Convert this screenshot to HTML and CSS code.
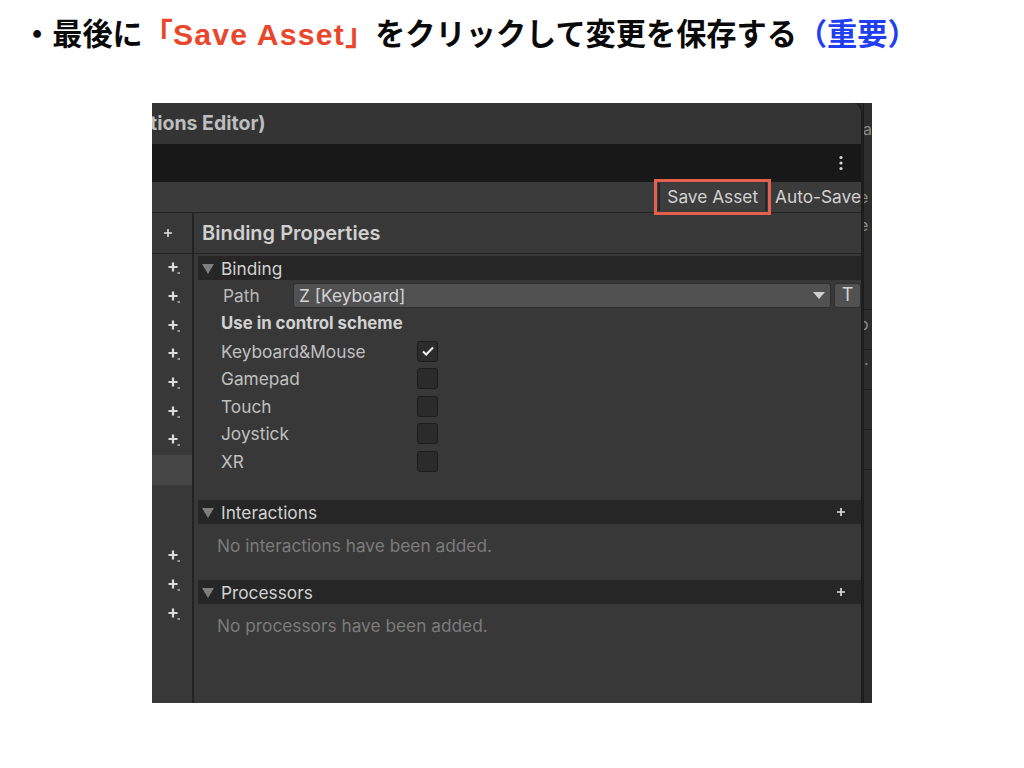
FILE: index.html
```html
<!DOCTYPE html>
<html lang="ja">
<head>
<meta charset="utf-8">
<title>Save Asset</title>
<link rel="stylesheet" href="styles.css">
</head>
<body>
<div class="page">
  <h1 class="headline">・最後に<span class="red">「<span class="latin">Save Asset</span>」</span>をクリックして変更を保存する<span class="blue">（重要）</span></h1>

  <div class="shot">
    <div class="editor">
      <div class="titlebar">tions Editor)</div>
      <div class="menubar">
        <svg class="kebab" width="6" height="16" viewBox="0 0 6 16"><circle cx="3" cy="2.5" r="1.6"/><circle cx="3" cy="8" r="1.6"/><circle cx="3" cy="13.5" r="1.6"/></svg>
      </div>
      <div class="toolbar">
        <div class="save-btn">Save Asset</div>
        <div class="autosave">Auto-Save</div>
      </div>
      <div class="content">
        <div class="tree">
          <div class="tree-head">
            <svg width="10" height="10" viewBox="0 0 10 10"><path d="M5 1v8M1 5h8"/></svg>
          </div>
          <div class="tree-row"><svg class="addi" width="14" height="14" viewBox="0 0 14 14"><path d="M6 1.5v9M1.5 6h9"/><path class="dash" d="M10.5 12h2.5"/></svg></div>
          <div class="tree-row"><svg class="addi" width="14" height="14" viewBox="0 0 14 14"><path d="M6 1.5v9M1.5 6h9"/><path class="dash" d="M10.5 12h2.5"/></svg></div>
          <div class="tree-row"><svg class="addi" width="14" height="14" viewBox="0 0 14 14"><path d="M6 1.5v9M1.5 6h9"/><path class="dash" d="M10.5 12h2.5"/></svg></div>
          <div class="tree-row"><svg class="addi" width="14" height="14" viewBox="0 0 14 14"><path d="M6 1.5v9M1.5 6h9"/><path class="dash" d="M10.5 12h2.5"/></svg></div>
          <div class="tree-row"><svg class="addi" width="14" height="14" viewBox="0 0 14 14"><path d="M6 1.5v9M1.5 6h9"/><path class="dash" d="M10.5 12h2.5"/></svg></div>
          <div class="tree-row"><svg class="addi" width="14" height="14" viewBox="0 0 14 14"><path d="M6 1.5v9M1.5 6h9"/><path class="dash" d="M10.5 12h2.5"/></svg></div>
          <div class="tree-row"><svg class="addi" width="14" height="14" viewBox="0 0 14 14"><path d="M6 1.5v9M1.5 6h9"/><path class="dash" d="M10.5 12h2.5"/></svg></div>
          <div class="tree-row selected"></div>
          <div class="tree-gap"></div>
          <div class="tree-row"><svg class="addi" width="14" height="14" viewBox="0 0 14 14"><path d="M6 1.5v9M1.5 6h9"/><path class="dash" d="M10.5 12h2.5"/></svg></div>
          <div class="tree-row"><svg class="addi" width="14" height="14" viewBox="0 0 14 14"><path d="M6 1.5v9M1.5 6h9"/><path class="dash" d="M10.5 12h2.5"/></svg></div>
          <div class="tree-row"><svg class="addi" width="14" height="14" viewBox="0 0 14 14"><path d="M6 1.5v9M1.5 6h9"/><path class="dash" d="M10.5 12h2.5"/></svg></div>
        </div>

        <div class="props">
          <div class="props-head">Binding Properties</div>

          <div class="fold">
            <span class="tri"></span><span class="fold-label">Binding</span>
          </div>
          <div class="field">
            <span class="field-label">Path</span>
            <div class="dropdown"><span>Z [Keyboard]</span><span class="dd-arrow"></span></div>
            <div class="tbtn">T</div>
          </div>
          <div class="subhead">Use in control scheme</div>
          <div class="check-row"><span class="check-label">Keyboard&amp;Mouse</span><span class="box"><svg width="14" height="12" viewBox="0 0 14 12"><path d="M2 6.5l3.2 3L12 2.5"/></svg></span></div>
          <div class="check-row"><span class="check-label">Gamepad</span><span class="box"></span></div>
          <div class="check-row"><span class="check-label">Touch</span><span class="box"></span></div>
          <div class="check-row"><span class="check-label">Joystick</span><span class="box"></span></div>
          <div class="check-row"><span class="check-label">XR</span><span class="box"></span></div>

          <div class="fold fold-gap">
            <span class="tri"></span><span class="fold-label">Interactions</span>
            <svg class="fold-plus" width="10" height="10" viewBox="0 0 10 10"><path d="M5 1v8M1 5h8"/></svg>
          </div>
          <div class="empty">No interactions have been added.</div>

          <div class="fold">
            <span class="tri"></span><span class="fold-label">Processors</span>
            <svg class="fold-plus" width="10" height="10" viewBox="0 0 10 10"><path d="M5 1v8M1 5h8"/></svg>
          </div>
          <div class="empty">No processors have been added.</div>
        </div>
      </div>
    </div>

    <div class="strip">
      <div class="strip-top"><span class="strip-txt">la</span></div>
      <div class="strip-mid"><span class="strip-txt">e</span><span class="strip-txt">e</span></div>
      <div class="strip-blank"></div>
      <div class="strip-line"><span class="strip-txt">o</span></div>
      <div class="strip-line"><span class="strip-txt dots">·</span></div>
      <div class="strip-line"></div>
      <div class="strip-line"></div>
      <div class="strip-rest"></div>
    </div>
  </div>
</div>
</body>
</html>
```

FILE: styles.css
```css
* { box-sizing: border-box; }

html, body {
  margin: 0;
  padding: 0;
  background: #ffffff;
}

.page {
  width: 1024px;
  height: 768px;
  overflow: hidden;
  background: #ffffff;
}

.headline {
  margin: 0;
  padding: 12px 0 0 22px;
  height: 55px;
  font-family: "Noto Sans CJK JP", "Noto Sans", sans-serif;
  font-weight: 700;
  font-size: 30.2px;
  line-height: 40px;
  color: #0a0a0a;
  white-space: nowrap;
}

.red { color: #e9462b; }
.blue { color: #1f3ff0; }
.latin {
  font-family: "Liberation Sans", Arial, sans-serif;
  letter-spacing: 1.2px;
}

/* screenshot */
.shot {
  margin: 48px 0 0 152px;
  width: 720px;
  height: 600px;
  display: flex;
  background: #262626;
  font-family: Inter, "Noto Sans", sans-serif;
}

.editor {
  width: 711px;
  height: 600px;
  flex: none;
  display: flex;
  flex-direction: column;
  background: #383838;
  border-top-right-radius: 11px;
  border-right: 2px solid #1e1e1e;
  overflow: hidden;
}

.titlebar {
  height: 41px;
  flex: none;
  background: #343434;
  color: #bdbdbd;
  font-weight: 700;
  font-size: 19.5px;
  line-height: 41px;
  text-indent: -2px;
  white-space: nowrap;
}

.menubar {
  height: 38px;
  flex: none;
  background: #181818;
  display: flex;
  justify-content: flex-end;
  align-items: center;
  padding-right: 17px;
}
.kebab { fill: #d6d6d6; }

.toolbar {
  height: 31px;
  flex: none;
  background: #3b3b3b;
  border-bottom: 1px solid #222222;
  display: flex;
  justify-content: flex-end;
  align-items: center;
  gap: 8px;
}

.save-btn {
  position: relative;
  z-index: 1;
  height: 28px;
  padding: 0 7px;
  background: #3d3d3d;
  border-left: 2px solid #262626;
  border-right: 2px solid #262626;
  color: #d2d2d2;
  font-size: 17.3px;
  line-height: 28px;
  outline: 3px solid #e5614d;
  outline-offset: 1px;
  white-space: nowrap;
  flex: none;
}

.autosave {
  color: #d2d2d2;
  font-size: 17.3px;
  line-height: 28px;
  white-space: nowrap;
  flex: none;
}

.content {
  flex: 1;
  display: flex;
  min-height: 0;
}

/* left tree */
.tree {
  width: 42px;
  flex: none;
  border-right: 2px solid #232323;
  background: #383838;
  display: flex;
  flex-direction: column;
}

.tree-head {
  height: 41px;
  border-bottom: 1px solid #242424;
  display: flex;
  align-items: center;
  padding-left: 11px;
  flex: none;
}
.tree-head svg path,
.fold-plus path {
  stroke: #e0e0e0;
  stroke-width: 1.6;
  fill: none;
}

.tree-row {
  height: 28.7px;
  flex: none;
  display: flex;
  align-items: center;
  padding-left: 15px;
}
.tree-row.selected {
  height: 30px;
  background: #464646;
}
.tree-gap {
  height: 57px;
  flex: none;
}
.addi path {
  stroke: #dcdcdc;
  stroke-width: 2.2;
  fill: none;
}
.addi path.dash {
  stroke-width: 1.4;
  stroke: #bdbdbd;
}

/* properties */
.props {
  flex: 1;
  display: flex;
  flex-direction: column;
}

.props-head {
  height: 41px;
  flex: none;
  border-bottom: 1px solid #242424;
  padding-left: 8px;
  color: #d0d0d0;
  font-weight: 600;
  font-size: 20px;
  line-height: 40px;
}

.fold {
  margin: 2px 0 0 4px;
  height: 24px;
  flex: none;
  background: #262626;
  display: flex;
  align-items: center;
  padding-left: 4px;
  color: #d2d2d2;
  font-size: 17.3px;
}
.fold-gap { margin-top: 25px; }

.tri {
  width: 0;
  height: 0;
  border-left: 6px solid transparent;
  border-right: 6px solid transparent;
  border-top: 10px solid #7f7f7f;
  margin-right: 7px;
  margin-top: 1px;
}
.fold-label { flex: 1; }
.fold-plus { margin-right: 15px; }

.field {
  margin: 3px 0 0 4px;
  height: 25px;
  flex: none;
  display: flex;
  align-items: center;
  padding-left: 25px;
}
.field-label {
  width: 70px;
  flex: none;
  color: #b9b9b9;
  font-size: 17.3px;
}
.dropdown {
  width: 538px;
  flex: none;
  height: 25px;
  background: #515151;
  border: 1px solid #2f2f2f;
  border-radius: 3px;
  display: flex;
  align-items: center;
  justify-content: space-between;
  padding: 0 5px 0 5px;
  color: #d4d4d4;
  font-size: 17.3px;
}
.dd-arrow {
  width: 0;
  height: 0;
  border-left: 6px solid transparent;
  border-right: 6px solid transparent;
  border-top: 7px solid #cfcfcf;
}
.tbtn {
  margin-left: 3px;
  width: 27px;
  flex: none;
  height: 25px;
  background: #515151;
  border: 1px solid #2f2f2f;
  border-radius: 3px;
  color: #d4d4d4;
  font-size: 18px;
  line-height: 22px;
  text-align: center;
}

.subhead {
  margin-left: 27px;
  height: 29.5px;
  flex: none;
  color: #d2d2d2;
  font-weight: 700;
  font-size: 16.8px;
  line-height: 31px;
}

.check-row {
  margin-left: 27px;
  height: 27.5px;
  flex: none;
  display: flex;
  align-items: center;
}
.check-label {
  width: 196px;
  color: #c0c0c0;
  font-size: 17.3px;
}
.box {
  width: 21px;
  height: 21px;
  background: #2b2b2b;
  border: 1px solid #1d1d1d;
  border-radius: 3px;
  display: flex;
  align-items: center;
  justify-content: center;
}
.box svg path {
  stroke: #f0f0f0;
  stroke-width: 2;
  fill: none;
}

.empty {
  height: 54px;
  flex: none;
  padding: 10px 0 0 23px;
  color: #7b7b7b;
  font-size: 17.3px;
  line-height: 24px;
}

/* right strip (neighbouring panel) */
.strip {
  flex: 1;
  display: flex;
  flex-direction: column;
  overflow: hidden;
  background: #2c2c2c;
  border-left: 1px solid #1c1c1c;
}
.strip-txt {
  display: block;
  margin-left: -5px;
  color: #8a8a8a;
  font-size: 16px;
  line-height: 28px;
  white-space: nowrap;
}
.strip-top {
  height: 80px;
  padding-top: 12px;
  background: #2e2e2e;
}
.strip-mid {
  height: 60px;
}
.strip-blank { height: 66px; }
.strip-line {
  height: 40px;
  border-top: 1px solid #1f1f1f;
}
.dots { margin-left: 0; }
.strip-rest {
  flex: 1;
  border-top: 1px solid #1f1f1f;
}
```
